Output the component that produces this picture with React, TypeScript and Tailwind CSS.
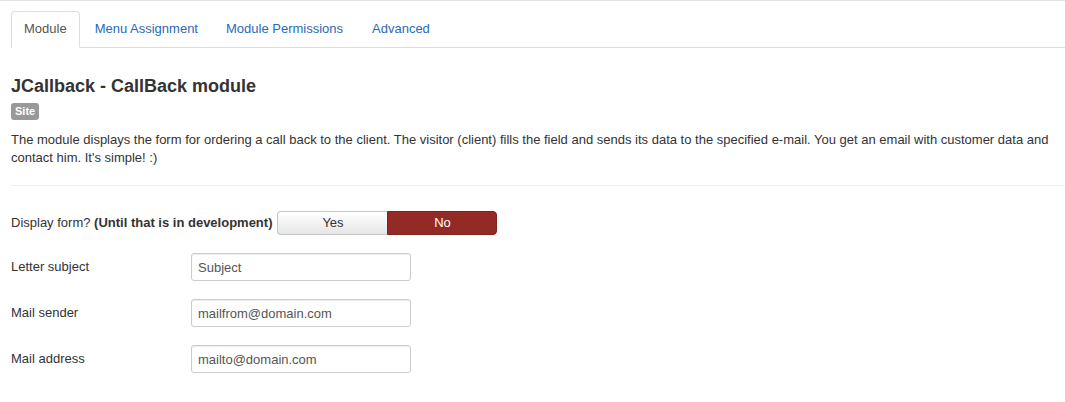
import React from "react";

const Field = ({ label, value }: { label: string; value: string }) => (
  <div className="flex items-center mt-[18px]">
    <label className="w-[180px] shrink-0 text-[13px] leading-[18px] text-[#333]">{label}</label>
    <input
      readOnly
      value={value}
      className="w-[220px] h-[28px] px-[6px] border border-[#ccc] rounded-[3px] text-[13px] text-[#555] bg-white shadow-[inset_0_1px_1px_rgba(0,0,0,0.075)] outline-none"
      style={{ fontFamily: '"Liberation Sans", Arial, sans-serif' }}
    />
  </div>
);

export default function App() {
  return (
    <div
      className="w-[1065px] h-[402px] bg-white border-t border-[#e3e3e3] overflow-hidden text-[#333]"
      style={{ fontFamily: '"Liberation Sans", Arial, Helvetica, sans-serif' }}
    >
      <div className="pl-[11px] pt-[10px]">
        <ul className="flex border-b border-[#ddd] text-[13px] leading-[18px]">
          <li className="-mb-px mr-[2px] px-[12px] pt-[8px] pb-[9px] border border-[#ddd] border-b-white rounded-t-[4px] bg-white text-[#555]">
            Module
          </li>
          <li className="-mb-px mr-[2px] px-[13px] pt-[9px] pb-[9px] text-[#2a69b8]">Menu Assignment</li>
          <li className="-mb-px mr-[2px] px-[13px] pt-[9px] pb-[9px] text-[#2a69b8]">Module Permissions</li>
          <li className="-mb-px mr-[2px] px-[14px] pt-[9px] pb-[9px] text-[#2a69b8]">Advanced</li>
        </ul>

        <h3 className="mt-[28px] text-[18px] leading-[20px] font-bold text-[#333]">JCallback - CallBack module</h3>
        <div className="mt-[7px] flex">
          <span className="block h-[17px] px-[4px] rounded-[3px] bg-[#999] text-white text-[11px] leading-[17px] font-bold">
            Site
          </span>
        </div>
        <p className="mt-[11px] text-[13px] leading-[18px] text-[#333] pr-[8px]">
          The module displays the form for ordering a call back to the client. The visitor (client) fills the field and sends its data to the specified e-mail. You get an email with customer data and contact him. It's simple! :)
        </p>
        <div className="mt-[18px] border-t border-[#eee]" />

        <div className="flex items-center mt-[25px]">
          <label className="mr-[5px] text-[13px] leading-[18px] text-[#333]">
            Display form? <b>(Until that is in development)</b>
          </label>
          <div className="flex h-[24px] text-[13px]">
            <div className="w-[110px] flex items-center justify-center border border-[#c5c5c5] border-r-0 rounded-l-[4px] bg-gradient-to-b from-white to-[#e6e6e6] text-[#333]">
              Yes
            </div>
            <div className="w-[110px] flex items-center justify-center border border-[#7f231f] rounded-r-[4px] bg-[#942a25] text-white">
              No
            </div>
          </div>
        </div>

        <Field label="Letter subject" value="Subject" />
        <Field label="Mail sender" value="mailfrom@domain.com" />
        <Field label="Mail address" value="mailto@domain.com" />
      </div>
    </div>
  );
}
